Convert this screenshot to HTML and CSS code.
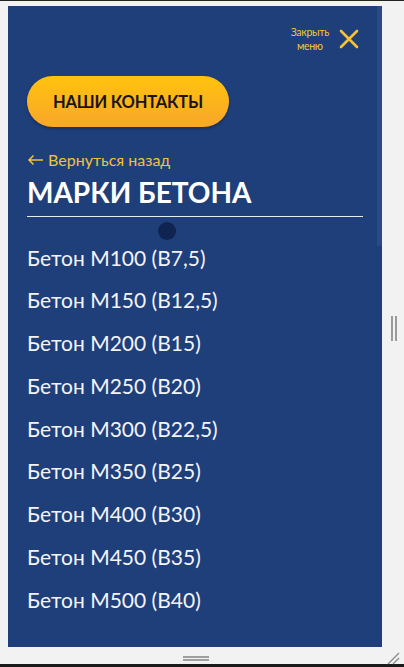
FILE: index.html
```html
<!DOCTYPE html>
<html lang="ru">
<head>
<meta charset="utf-8">
<link rel="stylesheet" href="styles.css">
</head>
<body>
<div class="frame">
  <div class="panel">
    <div class="close-row">
      <span class="close-text">Закрыть<br>меню</span>
      <svg class="close-icon" width="20" height="20" viewBox="0 0 20 20"><path d="M2 2 L18 18 M18 2 L2 18" stroke="#f6c233" stroke-width="2.6" stroke-linecap="round" fill="none"/></svg>
    </div>
    <a class="contacts-btn">НАШИ КОНТАКТЫ</a>
    <a class="back-link"><svg class="arrow" width="17" height="12" viewBox="0 0 17 12"><path d="M16 6 H2 M6.5 1.5 L2 6 L6.5 10.5" stroke="#f0c23e" stroke-width="1.5" fill="none"/></svg>Вернуться назад</a>
    <h1 class="title">МАРКИ БЕТОНА</h1>
    <div class="divider"></div>
    <div class="dot-row"><span class="dot"></span></div>
    <ul class="list">
      <li>Бетон М100 (В7,5)</li>
      <li>Бетон М150 (В12,5)</li>
      <li>Бетон М200 (В15)</li>
      <li>Бетон М250 (В20)</li>
      <li>Бетон М300 (В22,5)</li>
      <li>Бетон М350 (В25)</li>
      <li>Бетон М400 (В30)</li>
      <li>Бетон М450 (В35)</li>
      <li>Бетон М500 (В40)</li>
    </ul>
    <div class="scrollbar"></div>
  </div>
  <div class="side-grip"></div>
  <div class="bottom-grip"></div>
  <svg class="resize" width="14" height="14" viewBox="0 0 14 14"><path d="M2 13 L13 2 M7 13 L13 7" stroke="#8a8a8a" stroke-width="1.3" fill="none"/></svg>
</div>
</body>
</html>
```
FILE: styles.css
```css
html, body {
  margin: 0;
  padding: 0;
}
body {
  background: #f3f2f3;
  font-family: Lato, "Noto Sans", sans-serif;
}
.frame {
  position: relative;
  width: 404px;
  height: 667px;
  box-sizing: border-box;
  padding: 5px 0 0 8px;
  border-top: 1px solid #222;
  border-bottom: 3px solid #1a1a1a;
  background: #f3f2f3;
}
.panel {
  position: relative;
  width: 374px;
  height: 641px;
  box-sizing: border-box;
  background: #1f3f7a;
  padding: 0 19px;
  display: flex;
  flex-direction: column;
}
.scrollbar {
  position: absolute;
  right: 0;
  top: 0;
  width: 5px;
  height: 240px;
  background: #2a4a86;
}
.close-row {
  display: flex;
  justify-content: flex-end;
  align-items: center;
  gap: 10px;
  margin-top: 19px;
  padding-right: 4px;
}
.close-text {
  color: #f6c531;
  font-size: 10.5px;
  line-height: 14px;
  text-align: center;
  letter-spacing: -0.3px;
}
.close-icon {
  display: block;
}
.contacts-btn {
  margin-top: 23px;
  width: 202px;
  height: 51px;
  border-radius: 26px;
  background: linear-gradient(180deg, #ffc30d 0%, #f9a62b 100%);
  box-shadow: 0 2px 3px rgba(0,0,0,0.25);
  display: flex;
  align-items: center;
  justify-content: center;
  font-weight: 700;
  font-size: 16.5px;
  color: #1a1410;
  letter-spacing: -0.2px;
}
.back-link {
  margin-top: 24px;
  color: #f0c23e;
  font-size: 16px;
  line-height: 18px;
  display: flex;
  align-items: center;
  gap: 4px;
}
.arrow {
  display: block;
}
.title {
  margin: 6px 0 0;
  color: #ffffff;
  font-weight: 700;
  font-size: 28px;
  line-height: 34px;
  letter-spacing: 0;
}
.divider {
  margin-top: 7px;
  height: 1px;
  background: #e8ecf4;
}
.dot-row {
  display: flex;
  padding-left: 131px;
  margin-top: 5px;
}
.dot {
  width: 18px;
  height: 18px;
  border-radius: 50%;
  background: #0f2450;
}
.list {
  list-style: none;
  margin: -3.4px 0 0;
  padding: 0;
  color: #f3f4f7;
  font-size: 21px;
}
.list li {
  height: 42.75px;
  line-height: 42.75px;
}
.side-grip {
  position: absolute;
  left: 391px;
  top: 315px;
  height: 25px;
  border-left: 2px solid #9a9a9a;
  border-right: 2px solid #9a9a9a;
  box-sizing: border-box;
  width: 6px;
}
.bottom-grip {
  position: absolute;
  left: 183px;
  top: 655px;
  width: 26px;
  height: 5px;
  border-top: 2px solid #a0a0a0;
  border-bottom: 2px solid #a0a0a0;
  box-sizing: border-box;
}
.resize {
  position: absolute;
  left: 386px;
  top: 650px;
}
```
